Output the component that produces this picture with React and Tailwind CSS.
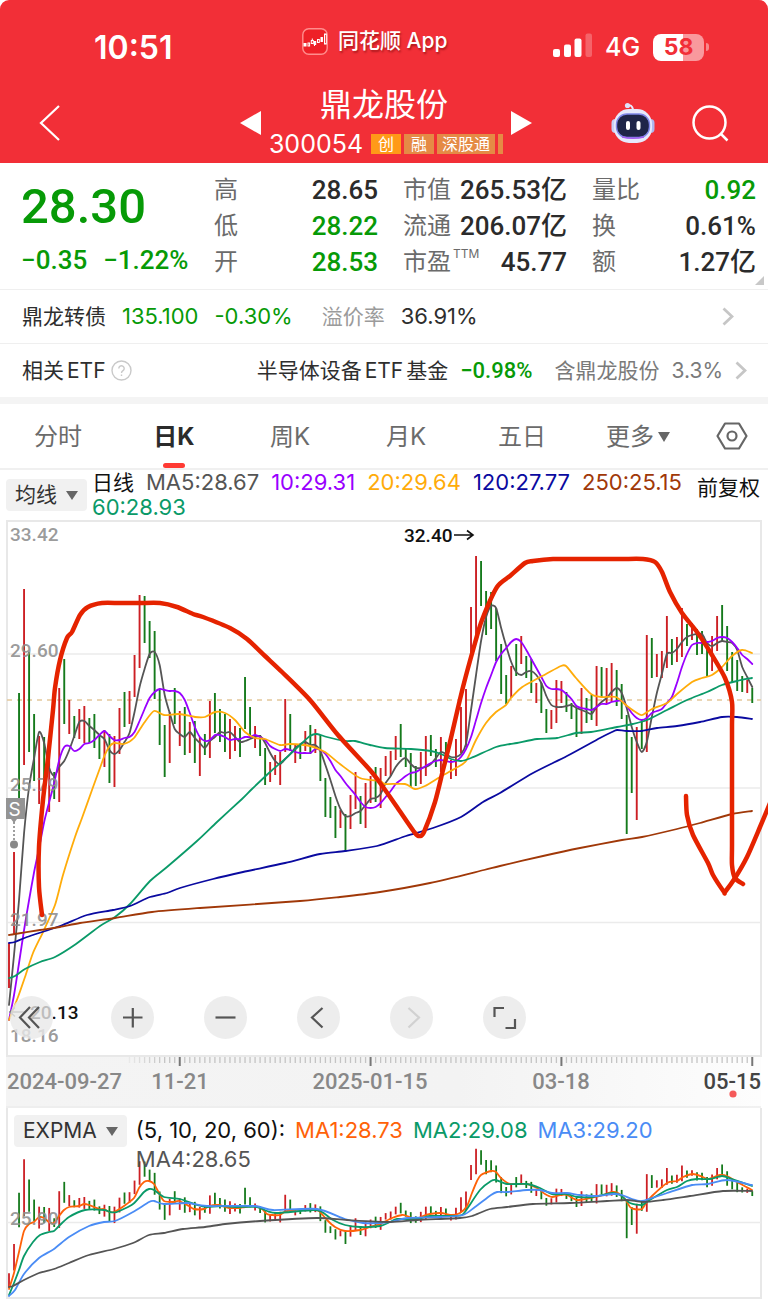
import React from 'react';

const UI = "font-[Inter,'Noto_Sans_CJK_SC',sans-serif]";
const NUM = "font-[Roboto,'Noto_Sans_CJK_SC',sans-serif]";

const UP = '#cc1f24';
const DOWN = '#157a1c';
const STEP = 5.022;
const barX = (i) => 9 + i * STEP;

// Daily high / low positions; "r" rising, "g" falling.
const BARS = `r943,988 r852,934 g693,800 r589,765 g652,752 g714,781 r736,804 g737,787 r740,812 g772,799
r688,802 g659,724 r700,734 g716,738 r709,739 r706,743 g718,743 g714,748 g735,759 r730,767
g734,783 r736,787 r708,754 g692,727 r691,724 r655,697 r595,668 g596,643 g621,658 g631,699
g689,745 g725,777 r712,763 g688,724 r711,746 g707,755 r722,753 g721,763 r737,776 g734,755
r701,758 g693,733 g709,742 g714,752 r719,759 r726,751 g728,757 g677,729 g707,738 r726,748
g735,756 g748,785 r762,782 r755,775 r752,785 r699,752 g714,751 r744,763 g744,759 r731,751
g725,754 r729,753 g735,781 g778,817 g797,818 g806,838 r810,828 g814,852 r795,829 r772,809
g796,824 r783,828 r776,803 g767,802 r768,808 r756,776 r751,776 r736,760 g724,757 g748,767
g753,787 g766,786 r752,784 r736,776 g735,756 g749,767 r737,772 g742,763 r760,779 r739,776
r707,753 r689,747 r607,653 r556,635 g561,606 g591,635 g592,629 g608,661 g644,694 g675,704
r666,698 g644,676 r636,664 g656,678 g659,693 r683,703 g683,713 g709,733 r710,729 r680,723
r681,703 g692,712 g703,719 g708,737 r688,734 g698,723 g695,720 r666,726 g667,697 r668,704
r663,702 g670,706 g684,719 g715,834 g737,793 r727,820 g720,749 r635,752 g638,678 r654,677
r651,678 r616,668 g639,665 r637,662 r608,657 g624,646 r623,640 g629,655 g631,654 g644,676
r636,671 r616,651 g605,642 g626,671 g652,682 g660,691 g676,692 r680,693 g688,703`
  .split(/\s+/)
  .map((s, i) => {
    const [a, b] = s.slice(1).split(',').map(Number);
    return { x: barX(i), top: a, bottom: b, color: s[0] === 'r' ? UP : DOWN };
  });

const series = (s) => s.trim().split(/\s+/).map((v, i) => [barX(i), Number(v)]);
const points = (s) => s.trim().split(/\s+/).map((p) => p.split(',').map(Number));

const MA5 = series(`1005 955 900 833 787 758 732 743 768 776 767 761 750 736 722 721 726 730 735 739
750 754 750 742 733 712 687 669 654 652 665 695 713 729 734 737 732 738 743 748
741 737 732 733 732 737 742 741 739 737 736 743 753 761 764 759 754 748 744 742
745 745 751 765 780 796 809 816 816 813 811 805 799 798 794 783 776 767 761 758
764 768 768 767 764 758 752 754 757 757 754 744 710 675 641 617 606 608 628 646
662 672 675 672 671 675 683 696 705 707 707 706 705 708 710 712 714 707 702 698
692 688 693 708 727 742 752 742 717 693 674 654 653 649 642 637 635 634 634 643
646 643 641 642 643 650 667 677 687`);

const MA10 = series(`1020 995 963 930 900 872 848 822 802 783 760 747 746 751 749 744 743 740 735 731
736 740 740 738 737 732 721 709 698 692 689 690 691 691 693 700 713 727 737 741
740 735 735 737 740 739 739 737 737 735 737 740 746 749 751 749 750 752 753 753
753 749 750 754 761 770 776 783 789 795 802 807 808 807 803 797 791 784 780 776
773 772 769 766 763 761 760 761 762 761 757 749 737 720 703 688 675 662 654 648
642 639 642 650 659 668 677 686 689 689 690 694 699 706 708 709 710 707 704 704
702 701 701 706 713 718 720 718 713 711 709 703 697 683 667 654 645 643 643 642
641 638 637 638 642 648 655 659 664`);

const MA20 = points(`9,1020 18,997 25,977 33,953 43,932 55,905 63,875 75,837 82,818 92,790 100,768 104,757 109,747 114,743
124,744 134,738 144,723 154,711 164,715 179,714 195,717 205,717 215,712 225,713 235,720 245,732 255,738
265,739 280,745 290,744 310,746 325,752 340,764 360,778 380,781 385,784 405,784 415,789 425,786 440,777
456,768 466,761 476,740 486,723 496,712 506,705 511,698 521,688 531,682 546,674 561,666 566,666 576,678
591,694 601,697 616,697 627,706 637,713 642,715 652,709 667,703 677,694 692,682 702,678 712,675 722,667
732,656 742,650 752,653`);

const MA60 = points(`9,978 15,976 25,969 40,962 55,957 76,944 100,926 115,917 130,904 150,881 167,867 197,841 217,822
242,799 252,789 270,772 285,759 300,745 310,736 317,734 327,737 345,741 355,741 370,745 385,748 411,749
431,751 441,754 451,759 461,761 471,758 496,747 510,744 517,743 537,739 557,738 576,733 591,732 617,727
633,724 647,720 667,710 687,700 707,692 722,685 737,681 752,678`);

const MA120 = points(`9,943 15,942 27,937 60,926 87,915 113,910 130,906 150,897 167,893 180,888 213,879 243,872 285,863
320,854 345,851 377,846 406,836 433,828 461,817 483,802 500,793 533,773 567,756 600,738 612,732 617,730
627,731 642,731 657,728 677,726 700,722 722,717 737,717 752,719`);

const MA250 = points(`9,935 15,934 40,930 60,927 80,923 115,918 152,912 200,908 300,901 340,897 380,892 430,883 484,870
500,866 543,856 580,848 622,840 642,837 677,829 700,823 732,814 752,811`);

const STROKE_A = points(`42,915 39,887 39,847 43,800 48,758 53,710 55,688 60,660 67,638 72,632 80,615 88,607 102,603 120,603
140,603 160,603 177,607 193,614 203,617 230,628 247,639 265,656 282,672 310,700 338,735 370,770 383,787
397,807 415,833 420,836 424,832 435,802 443,770 450,742 463,687 475,643 482,620 497,587 510,576 525,563
533,561 553,559 580,559 620,559 643,559 655,562 662,572 670,592 682,613 697,632 712,655 725,678 732,702
732,725 732,780 732,845 732,865 735,878 743,884`);

const STROKE_B = points(`686,796 687,815 693,835 708,863 713,875 724,892 725,892 735,878 747,857 760,827 770,803`);

const EXP1 = points(`9,1289 14,1273 19,1252 24,1231 29,1224 34,1222 39,1217 44,1218 49,1222 54,1223 59,1216 64,1210 69,1207
79,1206 84,1204 89,1205 99,1209 104,1209 109,1212 114,1212 124,1206 134,1198 139,1188 144,1182 149,1181
154,1184 159,1193 164,1201 174,1202 179,1201 189,1206 194,1209 204,1209 209,1206 219,1205 229,1208
239,1208 245,1207 255,1206 262,1209 267,1214 272,1215 280,1215 287,1211 313,1209 320,1212 327,1220
335,1227 345,1231 360,1230 370,1227 380,1224 392,1218 402,1215 407,1216 412,1218 417,1219 423,1216
430,1214 441,1213 452,1215 460,1213 467,1206 472,1193 477,1181 481,1175 491,1171 496,1172 501,1178
510,1184 527,1184 537,1188 545,1194 552,1197 560,1195 567,1195 577,1200 590,1198 600,1196 612,1192
618,1193 625,1199 630,1207 634,1209 642,1209 646,1203 652,1196 667,1183 677,1181 683,1177 693,1174
703,1177 708,1179 720,1175 727,1176 737,1182 752,1190`);

const EXP2 = points(`9,1295 14,1283 19,1270 24,1256 33,1242 40,1235 49,1232 54,1231 59,1226 69,1217 85,1210 104,1210 110,1212
117,1212 133,1204 144,1192 149,1189 154,1190 164,1197 180,1199 197,1205 207,1207 220,1206 237,1207
257,1207 267,1211 277,1213 313,1210 322,1212 333,1220 345,1225 360,1227 380,1226 390,1222 397,1219
417,1219 430,1216 452,1216 462,1215 467,1209 480,1190 491,1181 496,1180 507,1184 527,1184 540,1188
552,1194 567,1194 577,1197 593,1197 612,1193 620,1195 630,1203 642,1205 648,1201 667,1190 677,1187
687,1181 697,1179 710,1179 722,1176 732,1179 752,1186`);

const EXP3 = points(`9,1296 15,1290 24,1274 39,1258 54,1249 69,1237 89,1226 104,1222 115,1221 133,1212 149,1202 154,1201
164,1204 187,1203 207,1206 255,1206 273,1210 317,1209 345,1219 363,1223 390,1222 407,1218 440,1217
463,1215 475,1207 491,1195 497,1192 507,1192 527,1190 540,1190 552,1193 567,1193 580,1195 597,1196
613,1194 622,1195 632,1199 642,1201 667,1193 692,1185 708,1184 727,1180 752,1185`);

const EXP4 = points(`9,1287 13,1286 24,1280 39,1273 54,1269 69,1263 89,1255 114,1249 133,1243 149,1235 164,1233 183,1229
205,1227 225,1224 260,1221 317,1218 347,1220 390,1222 417,1220 460,1218 472,1216 490,1209 507,1207
533,1204 570,1203 607,1201 627,1200 643,1202 663,1200 690,1196 723,1191 752,1191`);

function smooth(p) {
  let d = `M${p[0][0]} ${p[0][1]}`;
  for (let i = 0; i < p.length - 1; i++) {
    const a = p[i - 1] || p[i];
    const b = p[i];
    const c = p[i + 1];
    const e = p[i + 2] || c;
    const k = 8;
    d += `C${b[0] + (c[0] - a[0]) / k} ${b[1] + (c[1] - a[1]) / k} ${c[0] - (e[0] - b[0]) / k} ${c[1] - (e[1] - b[1]) / k} ${c[0]} ${c[1]}`;
  }
  return d;
}

function Line({ data, color, width = 1.8 }) {
  return (
    <path d={smooth(data)} fill="none" stroke={color} strokeWidth={width} strokeLinecap="round" strokeLinejoin="round" />
  );
}

function StatusBar() {
  return (
    <div className="grid grid-cols-[302fr_251fr_215fr] items-center pt-6">
      <span className="pt-[6px] pl-[94px] text-[32px] leading-9 font-semibold">10:51</span>
      <div className="-mt-2 flex items-center gap-[10px]">
        <svg width="26" height="27" viewBox="0 0 26 27" aria-hidden="true">
          <rect x="0.8" y="0.8" width="24.4" height="25.4" rx="6" fill="#ee2027" stroke="#ff8d8d" strokeWidth="1.4" />
          <g fill="#fff" stroke="#fff" strokeWidth="1">
            <rect x="2" y="15.500" width="2" height="2.500" />
            <rect x="6" y="15" width="1.600" height="3" fill="none" />
            <rect x="9.300" y="12.500" width="2" height="3" fill="none" />
            <path d="M10.300 10.500v2M12.500 14v4" />
            <rect x="12.200" y="13.500" width="1.500" height="3" />
            <rect x="15.500" y="11.500" width="1.800" height="3" fill="none" />
            <rect x="19" y="9.500" width="1.400" height="4" />
            <rect x="22.500" y="6" width="1.800" height="10" fill="none" />
          </g>
        </svg>
        <span className="text-[21px] leading-7 font-medium whitespace-nowrap [text-shadow:1px_2px_2px_rgba(90,0,0,0.45)]">同花顺 App</span>
      </div>
      <div className="flex items-center pt-1">
        <svg width="39" height="29" viewBox="0 0 39 29" aria-hidden="true" fill="#fff">
          <rect x="0" y="16" width="7" height="8" rx="2" />
          <rect x="11" y="11.500" width="7" height="12.500" rx="2" />
          <rect x="21.500" y="5.500" width="7" height="18.500" rx="2" />
          <rect x="32.500" y="0.500" width="6.500" height="23.500" rx="2" opacity="0.25" />
        </svg>
        <span className="ml-[13px] text-[25px] leading-7 font-medium">4G</span>
        <span className="ml-[13px] flex h-[27px] w-[51px] items-center justify-center rounded-[8px] bg-[linear-gradient(90deg,#fff_58%,#f9999d_58%)] text-[23px] font-bold text-[#f22f37]">
          58
        </span>
        <span className="ml-0.5 h-2 w-[3px] rounded-r-full bg-[#f9878b]" />
      </div>
    </div>
  );
}

function Robot() {
  return (
    <svg width="44" height="42" viewBox="0 0 44 42" aria-hidden="true">
      <path d="M16 3.500q5-1.500 6 4" fill="none" stroke="#e9ebff" strokeWidth="2" strokeLinecap="round" />
      <circle cx="16.500" cy="3.500" r="2.600" fill="#dfe2fb" />
      <rect x="0.500" y="17" width="8" height="14" rx="4" fill="#c9d0f6" />
      <rect x="35.500" y="17" width="8" height="14" rx="4" fill="#aeb7ee" />
      <rect x="3" y="7" width="38" height="34" rx="15" fill="#e6e9fc" />
      <rect x="5.500" y="12" width="33" height="23.500" rx="10.500" fill="#1f2548" stroke="#7f86e8" strokeWidth="1.400" />
      <path d="M11 35q11 2.500 22 0" fill="none" stroke="#a35df0" strokeWidth="1.500" />
      <rect x="15" y="19" width="4" height="9" rx="2" fill="#fff" />
      <rect x="25.500" y="19" width="4" height="9" rx="2" fill="#fff" />
    </svg>
  );
}

function Header() {
  return (
    <header className="h-[163px] rounded-t-[9px] bg-[#f22f37] text-white">
      <StatusBar />
      <div className="grid grid-cols-[240fr_292fr_236fr] items-center pt-5">
        <button aria-label="返回" className="ml-[39px] w-6">
          <svg width="22" height="36" viewBox="0 0 22 36" fill="none" stroke="#fff" strokeWidth="2.200">
            <path d="M20 1L2 18L20 35" />
          </svg>
        </button>
        <div className="flex items-center justify-between">
          <button aria-label="上一只">
            <svg width="21" height="24" viewBox="0 0 21 24" fill="#fff"><path d="M0 12L21 0V24z" /></svg>
          </button>
          <div className="flex flex-col items-center gap-1">
            <h1 className="pr-1 text-[32px] leading-[38px]">鼎龙股份</h1>
            <div className="flex items-center gap-[3px] text-[16px] leading-5">
              <span className="mr-[5px] text-[25px] leading-8">300054</span>
              <span className="bg-[#ff9a18] px-[7px]">创</span>
              <span className="bg-[#e58a45] px-[7px]">融</span>
              <span className="bg-[#e58a45] px-[5px]">深股通</span>
              <span className="h-5 w-[5px] bg-[#e58a45]" />
            </div>
          </div>
          <button aria-label="下一只">
            <svg width="21" height="24" viewBox="0 0 21 24" fill="#fff"><path d="M21 12L0 0V24z" /></svg>
          </button>
        </div>
        <div className="flex items-center justify-end gap-[37px] pr-[39px]">
          <button aria-label="智能助手"><Robot /></button>
          <button aria-label="搜索">
            <svg width="37" height="37" viewBox="0 0 37 37" fill="none" stroke="#fff" strokeWidth="2.500">
              <circle cx="17.500" cy="17.500" r="16" />
              <path d="M28.500 28.500L35.500 35.500" />
            </svg>
          </button>
        </div>
      </div>
    </header>
  );
}

function Stat({ label, sup, value, green }) {
  return (
    <div className="flex items-center justify-between leading-9">
      <span className="text-[24px] whitespace-nowrap text-[#6b6b6b]">
        {label}
        {sup && <sup className="-top-3 ml-0.5 text-[12px]">{sup}</sup>}
      </span>
      <span className={green ? `${NUM} text-[26px] font-medium whitespace-nowrap text-[#079a07]` : `${NUM} text-[26px] font-medium whitespace-nowrap text-[#2b2b2b]`}>
        {value}
      </span>
    </div>
  );
}

function Quote() {
  return (
    <section className="relative grid h-[127px] grid-cols-[168fr_164fr_164fr_164fr] gap-x-[25px] border-b border-[#efefef] pt-[9px] pr-3 pl-[21px]">
      <div className={`${NUM} text-[#079a07]`}>
        <div className="pt-[9px] text-[49px] leading-[52px] font-medium">28.30</div>
        <div className="mt-[11px] flex gap-4 text-[26px] leading-8 font-medium whitespace-nowrap">
          <span>−0.35</span>
          <span>−1.22%</span>
        </div>
      </div>
      <div>
        <Stat label="高" value="28.65" />
        <Stat label="低" value="28.22" green />
        <Stat label="开" value="28.53" green />
      </div>
      <div>
        <Stat label="市值" value="265.53亿" />
        <Stat label="流通" value="206.07亿" />
        <Stat label="市盈" sup="TTM" value="45.77" />
      </div>
      <div>
        <Stat label="量比" value="0.92" green />
        <Stat label="换" value="0.61%" />
        <Stat label="额" value="1.27亿" />
      </div>
      <svg className="absolute right-1 bottom-1" width="9" height="9" viewBox="0 0 9 9" fill="#c8c8c8" aria-hidden="true">
        <path d="M9 0V9H0z" />
      </svg>
    </section>
  );
}

function Chevron() {
  return (
    <svg width="12" height="19" viewBox="0 0 12 19" fill="none" stroke="#c6c6c6" strokeWidth="2.800" aria-hidden="true">
      <path d="M1.500 1.500L10 9.500L1.500 17.500" />
    </svg>
  );
}

function Related() {
  return (
    <>
      <a href="#bond" className="flex h-[54px] items-center border-b border-[#efefef] pr-[34px] pl-[22px] text-[22px] whitespace-nowrap text-[#2e2e2e]">
        <span className="text-[21px]">鼎龙转债</span>
        <span className="ml-4 text-[#079a07]">135.100</span>
        <span className="ml-4 text-[#079a07]">-0.30%</span>
        <span className="ml-[29px] text-[21px] text-[#9b9b9b]">溢价率</span>
        <span className="ml-4">36.91%</span>
        <span className="ml-auto"><Chevron /></span>
      </a>
      <a href="#etf" className="flex h-[53px] items-center pr-[21px] pl-[22px] text-[21px] whitespace-nowrap text-[#2e2e2e]">
        <span>相关<span className="ml-[3px]">ETF</span></span>
        <svg className="ml-[5px]" width="21" height="21" viewBox="0 0 21 21" fill="none" stroke="#c9c9c9" strokeWidth="1.400" aria-hidden="true">
          <circle cx="10.500" cy="10.500" r="9.500" />
          <path d="M7.800 8.500a2.700 2.700 0 1 1 4.200 2.200q-1.500 1-1.500 2.300M10.500 14.500v1.600" />
        </svg>
        <span className="ml-auto">半导体设备<span className="mx-[3px]">ETF</span>基金</span>
        <span className={`${NUM} ml-3 text-[22px] font-medium text-[#079a07]`}>−0.98%</span>
        <span className="ml-[22px] text-[#7a7a7a]">含鼎龙股份</span>
        <span className="ml-3 text-[#7a7a7a]">3.3%</span>
        <span className="ml-3"><Chevron /></span>
      </a>
      <div className="h-[7px] bg-[#f4f4f4]" />
    </>
  );
}

function Tabs() {
  return (
    <nav className="grid h-[66px] grid-cols-[repeat(6,116fr)_72fr] items-stretch border-b-2 border-[#f0f0f0] text-[24px] text-[#6b6b6b]">
      <button className="pt-0.5">分时</button>
      <button className="relative pt-0.5 font-bold text-[#2b2b2b]">
        日K
        <span className="absolute bottom-0 left-1/2 h-[5px] w-[22px] -translate-x-1/2 rounded-sm bg-[#ff3a33]" />
      </button>
      <button className="pt-0.5">周K</button>
      <button className="pt-0.5">月K</button>
      <button className="pt-0.5">五日</button>
      <button className="flex items-center justify-center gap-1 pt-0.5">
        更多
        <svg width="12" height="10" viewBox="0 0 12 10" fill="#666" aria-hidden="true"><path d="M0 0H12L6 10z" /></svg>
      </button>
      <button aria-label="设置" className="flex items-center justify-center">
        <svg width="32" height="28" viewBox="0 0 32 28" fill="none" stroke="#666" strokeWidth="2.200">
          <path d="M9 1.500H23L30.500 14L23 26.500H9L1.500 14z" strokeLinejoin="round" />
          <circle cx="16" cy="14" r="4.500" />
        </svg>
      </button>
    </nav>
  );
}

function PickButton({ children }) {
  return (
    <button className="flex h-8 shrink-0 items-center gap-[9px] rounded bg-[#f1f1f1] px-[9px] text-[21px] whitespace-nowrap text-[#333]">
      {children}
      <svg width="12" height="9" viewBox="0 0 12 9" fill="#666" aria-hidden="true"><path d="M0 0H12L6 9z" /></svg>
    </button>
  );
}

function AverageLegend() {
  return (
    <div className="flex h-[50px] items-start pr-2 pl-[6px]">
      <div className="pt-[9px]"><PickButton>均线</PickButton></div>
      <div className="ml-[5px] flex min-w-0 flex-1 flex-wrap gap-x-3 text-[22px] leading-[25px] whitespace-nowrap text-[#555]">
        <span className="text-[21px] text-[#111]">日线</span>
        <span>MA5:28.67</span>
        <span className="text-[#9900ff]">10:29.31</span>
        <span className="text-[#ffac0a]">20:29.64</span>
        <span className="text-[#0a0aa0]">120:27.77</span>
        <span className="text-[#a03808]">250:25.15</span>
        <span className="text-[#0a9a68]">60:28.93</span>
      </div>
      <button className="pt-[3px] text-[21px] leading-[30px] whitespace-nowrap text-[#111]">前复权</button>
    </div>
  );
}

const TOOLS = [
  ['最早', <path key="p" d="M20 11L10 21.500L20 32M29 11L19 21.500L29 32" />],
  ['放大', <path key="p" d="M12 21.500H31.500M21.800 12V31.500" />],
  ['缩小', <path key="p" d="M11.500 21.500H31.500" />],
  ['向左', <path key="p" d="M25.500 12L15 21.500L25.500 31.500" />],
  ['向右', <path key="p" d="M18.500 12L29 21.500L18.500 31.500" opacity="0.18" />],
  ['全屏', <path key="p" d="M21 12H11.500V21M32 23V32H22.500" />],
];

function PriceChart() {
  const ticks = [];
  for (let i = 24; i <= 148; i++) ticks.push(i);
  return (
    <div className="relative">
      <svg className="block h-auto w-full" viewBox="0 520 768 588" role="img" aria-label="日K线图">
        <defs>
          <linearGradient id="axis" x1="0" x2="1" y1="0" y2="0">
            <stop offset="0" stopColor="#f4f4f4" />
            <stop offset="0.6" stopColor="#f3f3f3" />
            <stop offset="1" stopColor="#fdfdfd" />
          </linearGradient>
        </defs>
        <rect x="6" y="1056" width="755" height="52" fill="url(#axis)" />
        <path d="M6 1107H761" stroke="#ececec" strokeWidth="1.500" />
        <path d="M7 654H761M7 788H761M7 922.500H761" stroke="#ebebeb" strokeWidth="1.500" />
        <rect x="7" y="521" width="754" height="535" fill="none" stroke="#e8e8e8" strokeWidth="2" />
        <path d="M7 700H761" stroke="#e3c79b" strokeWidth="1.300" strokeDasharray="5 5" />
        {BARS.map((b) => (
          <path key={b.x} d={`M${b.x} ${b.top}V${b.bottom}`} stroke={b.color} strokeWidth="1.900" />
        ))}
        <Line data={MA5} color="#555" />
        <Line data={MA10} color="#9900ff" />
        <Line data={MA20} color="#ffac0a" />
        <Line data={MA60} color="#0a9a68" />
        <Line data={MA120} color="#0a0aa0" />
        <Line data={MA250} color="#a03808" />
        <g className={NUM} fontSize="19" fontWeight="500" fill="#8e8e8e" fillOpacity="0.9">
          <text x="10" y="541">33.42</text>
          <text x="10" y="657">29.60</text>
          <text x="10" y="791">25.79</text>
          <text x="10" y="926">21.97</text>
          <text x="10" y="1042">18.16</text>
        </g>
        <g className={NUM} fontSize="19" fontWeight="500" fill="#111">
          <text x="404" y="542">32.40</text>
          <text x="30" y="1019">20.13</text>
        </g>
        <g fill="none" stroke="#111" strokeWidth="1.600">
          <path d="M454 535H473M467 530.500L473 535L467 539.500" />
          <path d="M26 1012H10M15 1007.500L10 1012L15 1016.500" stroke="#777" />
        </g>
        <path d="M6 798H25V819H17L14 823L11 819H6z" fill="#949494" />
        <text x="14.500" y="815.500" textAnchor="middle" className={UI} fontSize="19" fill="#fff">S</text>
        <path d="M14 822V841" stroke="#888" strokeWidth="1.600" strokeDasharray="2 2" />
        <circle cx="14" cy="844.500" r="4" fill="#888" />
        <g fill="none" stroke="#e52300" strokeWidth="4.500" strokeLinecap="round" strokeLinejoin="round">
          <path d={smooth(STROKE_A)} />
          <path d={smooth(STROKE_B)} />
        </g>
        {ticks.map((i) => {
          const major = i === 34 || i === 72 || i === 110 || i === 148;
          return (
            <path
              key={i}
              d={`M${barX(i)} 1057V${major ? 1066 : 1063}`}
              stroke={major ? '#777' : '#c4c4c4'}
              strokeWidth={major ? 2 : 1.3}
              opacity={Math.min(1, (i - 22) / 9)}
            />
          );
        })}
        <g className={NUM} fontSize="22" fontWeight="500" fill="#888">
          <text x="7" y="1089">2024-09-27</text>
          <text x="180" y="1089" textAnchor="middle">11-21</text>
          <text x="370" y="1089" textAnchor="middle">2025-01-15</text>
          <text x="561" y="1089" textAnchor="middle">03-18</text>
          <text x="761" y="1089" textAnchor="end" fill="#444">05-15</text>
        </g>
        <circle cx="733" cy="1094" r="3.600" fill="#f55a5a" />
      </svg>
      <div className="absolute bottom-[69px] left-[10px] flex gap-[50px]">
        {TOOLS.map(([label, icon], i) => (
          <button key={label} aria-label={label} className={i === 0 ? 'mr-2 size-[43px] rounded-full bg-[#e8e8e8]/80' : 'size-[43px] rounded-full bg-[#e8e8e8]/80'}>
            <svg className="block size-full" viewBox="0 0 43 43" fill="none" stroke="#555" strokeWidth="2.200">{icon}</svg>
          </button>
        ))}
      </div>
    </div>
  );
}

function ExpmaPanel() {
  const scale = (y) => 1148.7 + 0.322 * (y - 556);
  return (
    <div className="relative">
      <svg className="block h-auto w-full" viewBox="0 1108 768 193" role="img" aria-label="EXPMA 指标图">
        <path d="M7 1108V1298H761V1108" fill="none" stroke="#e8e8e8" strokeWidth="2" />
        <path d="M7 1222.500H761" stroke="#ebebeb" strokeWidth="1.500" />
        {BARS.map((b) => (
          <path key={b.x} d={`M${b.x} ${scale(b.top)}V${scale(b.bottom)}`} stroke={b.color} strokeWidth="1.800" />
        ))}
        <Line data={EXP1} color="#ff6208" />
        <Line data={EXP2} color="#0a9a68" />
        <Line data={EXP3} color="#4a8cf5" />
        <Line data={EXP4} color="#555" />
        <text x="10" y="1225" className={NUM} fontSize="19" fontWeight="500" fill="#8e8e8e" fillOpacity="0.9">25.90</text>
      </svg>
      <div className="absolute inset-x-0 top-[7px] flex items-start pl-[14px]">
        <PickButton>EXPMA</PickButton>
        <div className="ml-[9px] flex max-w-[540px] flex-1 flex-wrap gap-x-[10px] pt-px text-[22px] leading-[29px] whitespace-nowrap text-[#555]">
          <span className="text-[#111]">(5, 10, 20, 60):</span>
          <span className="text-[#ff6208]">MA1:28.73</span>
          <span className="text-[#0a9a68]">MA2:29.08</span>
          <span className="text-[#4a8cf5]">MA3:29.20</span>
          <span>MA4:28.65</span>
        </div>
      </div>
    </div>
  );
}

export default function App() {
  return (
    <main className={`${UI} w-full overflow-hidden bg-white text-[#2b2b2b]`}>
      <Header />
      <Quote />
      <Related />
      <Tabs />
      <AverageLegend />
      <PriceChart />
      <ExpmaPanel />
    </main>
  );
}
